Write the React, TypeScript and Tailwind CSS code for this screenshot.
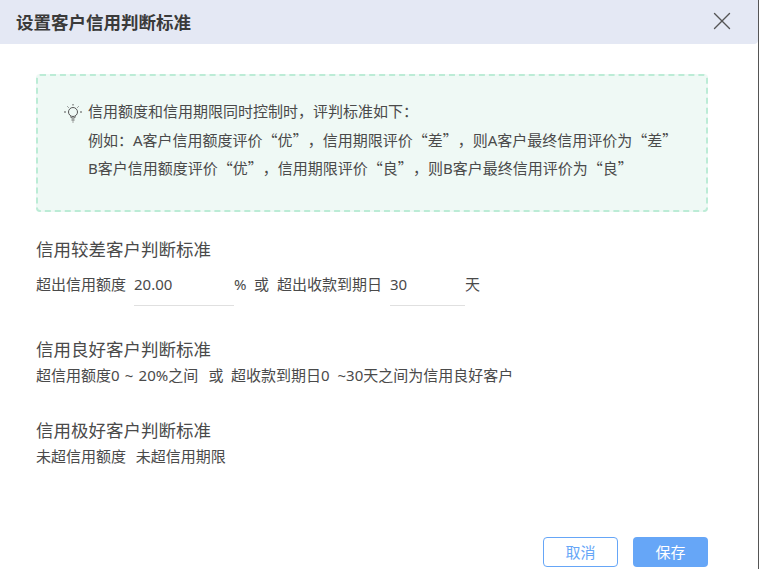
import { X } from "lucide-react";

const font = { fontFamily: '"Noto Sans", "Noto Sans CJK SC", sans-serif' };
const cjk = { fontFamily: '"Noto Sans CJK SC", sans-serif' };

function BulbIcon() {
  return (
    <svg width="18" height="20" viewBox="0 0 18 20" fill="none" stroke="#555" strokeWidth="1" className="shrink-0">
      <circle cx="9" cy="9" r="4.5" />
      <path d="M6.5 13.5l1 1.5h3l1-1.5M7.5 17h3M8.5 19h1" />
      <path d="M9 1v1.5M3.5 3.5l1 1M14.5 3.5l-1 1M0 9h2M16 9h2" />
    </svg>
  );
}

function Quote({ children }: { children: React.ReactNode }) {
  return <span style={cjk} lang="zh-CN">“{children}”</span>;
}

function Section({ title, children }: { title: string; children: React.ReactNode }) {
  return (
    <section>
      <h3 className="text-[17.5px] leading-[24px] font-normal text-[#4a4a4a]">{title}</h3>
      {children}
    </section>
  );
}

function Field({ value, width }: { value: string; width: string }) {
  return (
    <div className={`${width} flex h-[44px] items-center border-b border-[#e0e0e0] pt-[2px] text-[15px]`}>{value}</div>
  );
}

export default function App() {
  return (
    <div style={font} className="h-[569px] w-[759px] overflow-hidden border-r border-[#555] bg-white text-[15px] text-[#4a4a4a]">
      <header className="flex h-[44px] items-center justify-between rounded-br bg-[#e4e8f4] pl-[16px] pr-[21px]">
        <h2 className="text-[17.5px] font-bold text-[#3a3a3a]">设置客户信用判断标准</h2>
        <X size={30} strokeWidth={1.1} className="mb-[2px] text-[#555]" />
      </header>

      <div className="px-[36px] pr-[50px]">
        <div className="mt-[30px] flex h-[138px] gap-[6px] rounded border-2 border-dashed border-[#bcecd6] bg-[#eff9f5] pl-[26px] pt-[22px]">
          <div className="pt-[5px]"><BulbIcon /></div>
          <div className="leading-[27.5px] whitespace-nowrap [text-spacing-trim:space-all]">
            <p>信用额度和信用期限同时控制时，评判标准如下：</p>
            <p>例如：A客户信用额度评价<Quote>优</Quote>，信用期限评价<Quote>差</Quote>，则A客户最终信用评价为<Quote>差</Quote></p>
            <p>B客户信用额度评价<Quote>优</Quote>，信用期限评价<Quote>良</Quote>，则B客户最终信用评价为<Quote>良</Quote></p>
          </div>
        </div>

        <div className="mt-[25px]">
          <Section title="信用较差客户判断标准">
            <div className="mt-[1px] flex h-[44px] items-center whitespace-nowrap">
              <span className="w-[98px]">超出信用额度</span>
              <Field value="20.00" width="w-[100px]" />
              <span className="w-[20px]">%</span>
              <span className="w-[23px]">或</span>
              <span className="w-[113px]">超出收款到期日</span>
              <Field value="30" width="w-[75px]" />
              <span>天</span>
            </div>
          </Section>
        </div>

        <div className="mt-[31px]">
          <Section title="信用良好客户判断标准">
            <p className="leading-[28px] whitespace-pre [word-spacing:1.3px]">
              超信用额度0 ~ 20%之间  或  <span className="-ml-[3px] [word-spacing:4px]">超收款到期日0 ~30天之间为信用良好客户</span>
            </p>
          </Section>
        </div>

        <div className="mt-[29px]">
          <Section title="信用极好客户判断标准">
            <p className="leading-[28px] whitespace-pre [word-spacing:1px]">未超信用额度  未超信用期限</p>
          </Section>
        </div>

        <div className="mt-[67px] flex justify-end gap-[15px]">
          <button type="button" className="h-[30px] w-[75px] rounded border border-[#66a6f7] bg-white text-[15px] text-[#66a6f7]">取消</button>
          <button type="button" className="h-[30px] w-[75px] rounded bg-[#66a6f7] text-[15px] text-white">保存</button>
        </div>
      </div>
    </div>
  );
}
